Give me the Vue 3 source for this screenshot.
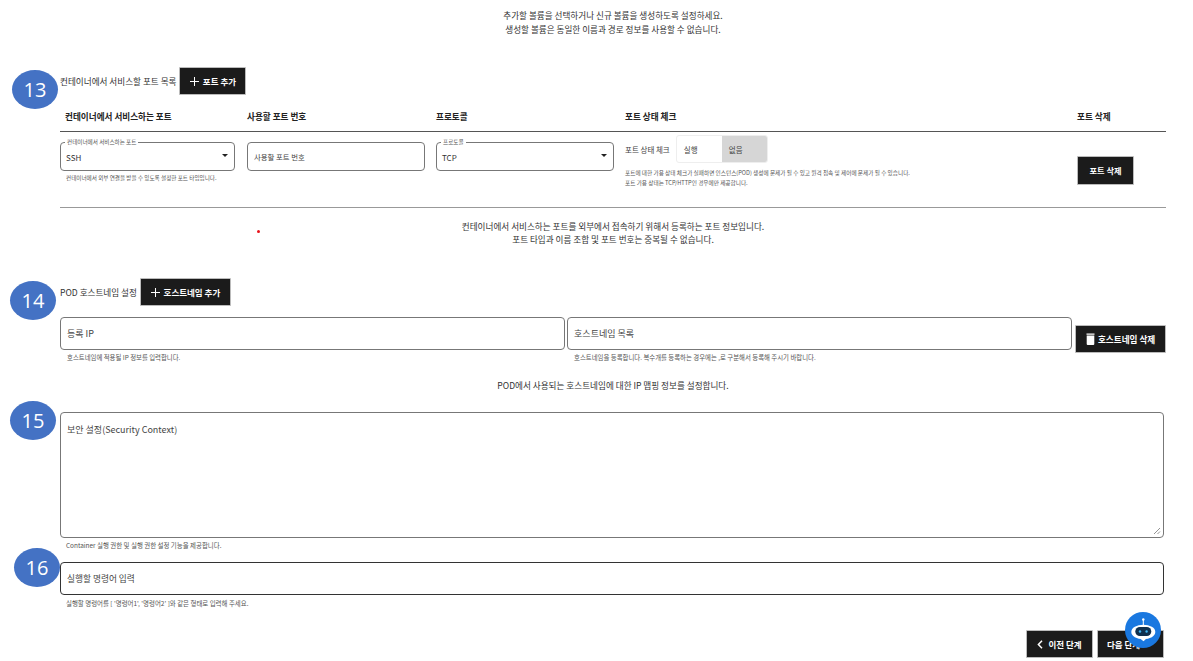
<template>
  <div class="page">
    <p class="notice top-notice">
      추가할 볼륨을 선택하거나 신규 볼륨을 생성하도록 설정하세요.<br />
      생성할 볼륨은 동일한 이름과 경로 정보를 사용할 수 없습니다.
    </p>

    <div class="section-head port-head">
      <span class="section-title">컨테이너에서 서비스할 포트 목록</span>
      <button class="dark-btn add-port">
        <svg class="plus" width="9" height="9" viewBox="0 0 9 9"><path d="M4.5 0v9M0 4.5h9" stroke="#fff" stroke-width="1" /></svg>
        포트 추가
      </button>
    </div>

    <div class="port-table">
      <div class="port-row table-head">
        <div class="first">컨테이너에서 서비스하는 포트</div>
        <div>사용할 포트 번호</div>
        <div>프로토콜</div>
        <div>포트 상태 체크</div>
        <div>포트 삭제</div>
      </div>
      <div class="port-row table-body">
        <div>
          <div class="field select-field first-field">
            <span class="legend">컨테이너에서 서비스하는 포트</span>
            <span class="value">SSH</span>
            <i class="caret"></i>
          </div>
          <p class="help">컨테이너에서 외부 연결을 받을 수 있도록 설정한 포트 타입입니다.</p>
        </div>
        <div>
          <div class="field port-field"><span class="placeholder small">사용할 포트 번호</span></div>
        </div>
        <div>
          <div class="field select-field port-field">
            <span class="legend">프로토콜</span>
            <span class="value">TCP</span>
            <i class="caret"></i>
          </div>
        </div>
        <div class="health-cell">
          <div class="health-line">
            <span class="health-label">포트 상태 체크</span>
            <div class="toggle">
              <span class="on">실행</span>
              <span class="off">없음</span>
            </div>
          </div>
          <p class="help health-help">
            포트에 대한 가용 상태 체크가 실패하면 인스턴스(POD) 생성에 문제가 될 수 있고 원격 접속 및 제어에 문제가 될 수 있습니다.<br />
            포트 가용 상태는 TCP/HTTP인 경우에만 제공합니다.
          </p>
        </div>
        <div class="delete-cell">
          <button class="dark-btn delete-port">포트 삭제</button>
        </div>
      </div>
    </div>

    <p class="notice port-notice">
      컨테이너에서 서비스하는 포트를 외부에서 접속하기 위해서 등록하는 포트 정보입니다.<br />
      포트 타입과 이름 조합 및 포트 번호는 중복될 수 없습니다.
    </p>

    <div class="section-head host-head">
      <span class="section-title">POD 호스트네임 설정</span>
      <button class="dark-btn add-host">
        <svg class="plus" width="9" height="9" viewBox="0 0 9 9"><path d="M4.5 0v9M0 4.5h9" stroke="#fff" stroke-width="1" /></svg>
        호스트네임 추가
      </button>
    </div>

    <div class="host-row">
      <div class="host-col">
        <div class="field tall"><span class="placeholder">등록 IP</span></div>
        <p class="help host-help">호스트네임에 적용될 IP 정보를 입력합니다.</p>
      </div>
      <div class="host-col">
        <div class="field tall"><span class="placeholder">호스트네임 목록</span></div>
        <p class="help host-help">호스트네임을 등록합니다. 복수개를 등록하는 경우에는 ,로 구분해서 등록해 주시기 바랍니다.</p>
      </div>
      <button class="dark-btn delete-host">
        <svg width="9" height="12" viewBox="0 0 9 12">
          <path d="M0.5 0.4h8v1.3h-8z M0.7 2.4h7.6v8.6a1 1 0 0 1-1 1H1.7a1 1 0 0 1-1-1z" fill="#fff" />
        </svg>
        호스트네임 삭제
      </button>
    </div>

    <p class="notice host-notice">POD에서 사용되는 호스트네임에 대한 IP 맵핑 정보를 설정합니다.</p>

    <div class="field area">
      <span class="placeholder">보안 설정(Security Context)</span>
      <svg class="grip" width="8" height="8" viewBox="0 0 8 8">
        <path d="M1 7 7 1M4.5 7 7 4.5" stroke="#777" stroke-width="0.8" fill="none" />
      </svg>
    </div>
    <p class="help wide-help">Container 실행 권한 및 실행 권한 설정 기능을 제공합니다.</p>

    <div class="field tall command"><span class="placeholder command-text">실행할 명령어 입력</span></div>
    <p class="help wide-help">실행할 명령어를 [ '명령어1', '명령어2' ]와 같은 형태로 입력해 주세요.</p>

    <div class="step-actions">
      <button class="dark-btn step">
        <svg width="6" height="9" viewBox="0 0 6 9"><path d="M5 0.8 1.4 4.5 5 8.2" stroke="#fff" stroke-width="1.5" fill="none" /></svg>
        이전 단계
      </button>
      <button class="dark-btn step next">다음 단계</button>
    </div>

    <span class="mark mark-13">13</span>
    <span class="mark mark-14">14</span>
    <span class="mark mark-15">15</span>
    <span class="mark mark-16">16</span>
    <i class="red-dot"></i>

    <div class="chatbot">
      <svg width="36" height="36" viewBox="0 0 36 36">
        <path d="M18.3 7v6" stroke="#fff" stroke-width="1" />
        <circle cx="18.3" cy="7.5" r="1.2" fill="#fff" />
        <ellipse cx="18.3" cy="20" rx="12" ry="7.3" fill="#fff" />
        <path d="M15 26.5h6.5l-3 2.7z" fill="#fff" />
        <rect x="10.3" y="15" width="16" height="9" rx="4.5" fill="#10304f" />
        <circle cx="15" cy="19.5" r="1.2" fill="#3fb4f0" />
        <circle cx="21.6" cy="19.5" r="1.2" fill="#3fb4f0" />
      </svg>
    </div>
  </div>
</template>

<script setup>
</script>

<style>
html,
body {
  margin: 0;
  background: #fff;
}
</style>

<style scoped>
.page {
  position: relative;
  width: 1193px;
  height: 661px;
  overflow: hidden;
  box-sizing: border-box;
  padding: 8px 27px 0 60px;
  font-family: "Noto Sans CJK KR", "Noto Sans", sans-serif;
  color: #222;
}

.notice {
  margin: 0;
  width: 1106px;
  text-align: center;
  font-size: 8.6px;
  line-height: 14px;
  color: #333;
}

.section-head {
  display: flex;
  align-items: center;
  gap: 3px;
}

.port-head {
  margin-top: 31px;
}

.host-head {
  margin-top: 32px;
}

.section-title {
  font-size: 8.6px;
  color: #333;
}

.dark-btn {
  display: inline-flex;
  align-items: center;
  justify-content: center;
  gap: 4px;
  padding: 0;
  border: 1px solid #bbb;
  border-radius: 1px;
  background: #1b1b1b;
  color: #fff;
  font-family: inherit;
  font-size: 8.5px;
  font-weight: 700;
}

.add-port {
  width: 67px;
  height: 28px;
}

.add-host {
  width: 91px;
  height: 28px;
}

.port-table {
  width: 1106px;
  margin-top: 7px;
}

.port-row {
  display: grid;
  grid-template-columns: 187px 189px 189px 452px 1fr;
}

.table-head {
  height: 30px;
  align-items: center;
  font-size: 8.6px;
  font-weight: 700;
  color: #222;
  border-bottom: 1px solid #555;
  padding-bottom: 2px;
  box-sizing: border-box;
}

.table-head .first {
  padding-left: 5px;
}

.table-body {
  height: 76px;
  box-sizing: border-box;
  border-bottom: 1px solid #999;
  padding-top: 10px;
}

.field {
  position: relative;
  box-sizing: border-box;
  border: 1px solid #777;
  border-radius: 4px;
  background: #fff;
  display: flex;
  align-items: center;
  padding-left: 5px;
}

.first-field {
  width: 175px;
  height: 29px;
}

.port-field {
  width: 178px;
  height: 29px;
}

.legend {
  position: absolute;
  top: -4px;
  left: 4px;
  padding: 0 2px;
  background: #fff;
  font-size: 5.6px;
  line-height: 7px;
  color: #555;
}

.value {
  font-size: 8px;
  color: #333;
  padding-top: 2px;
}

.placeholder {
  font-size: 9px;
  color: #444;
}

.placeholder.small {
  font-size: 7.4px;
  padding-left: 1px;
}

.caret {
  position: absolute;
  right: 6px;
  top: 11px;
  border-left: 3px solid transparent;
  border-right: 3px solid transparent;
  border-top: 3.5px solid #222;
}

.help {
  margin: 4px 0 0 6px;
  font-size: 5.6px;
  line-height: 7px;
  color: #555;
}

.health-cell {
  display: flex;
  flex-direction: column;
}

.health-line {
  display: flex;
  align-items: center;
  gap: 6px;
  margin-top: -7px;
}

.health-label {
  font-size: 7.5px;
  color: #444;
}

.toggle {
  display: flex;
  width: 92px;
  height: 28px;
  border: 1px solid #eee;
  border-radius: 3px;
  overflow: hidden;
  font-size: 7.5px;
  color: #444;
  box-sizing: border-box;
}

.toggle span {
  width: 50%;
  display: flex;
  align-items: center;
  padding-left: 7px;
  box-sizing: border-box;
}

.toggle .off {
  background: #d6d6d6;
}

.health-help {
  margin: 5px 0 0;
  font-size: 5.65px;
  line-height: 10px;
}

.delete-cell {
  padding-top: 13px;
}

.delete-port {
  width: 57px;
  height: 29px;
  font-size: 8.2px;
}

.port-notice {
  margin-top: 12px;
  line-height: 13px;
}

.host-row {
  display: flex;
  width: 1106px;
  gap: 2px;
  margin-top: 11px;
}

.host-col {
  width: 506px;
}

.tall {
  height: 33px;
  padding-left: 6px;
}

.host-help {
  margin: 4px 0 0 7px;
  font-size: 6.4px;
}

.delete-host {
  width: 91px;
  height: 28px;
  margin-left: 1px;
  margin-top: 8px;
  gap: 3px;
  font-size: 8.6px;
}

.host-notice {
  margin-top: 17px;
}

.area {
  width: 1104px;
  height: 126px;
  margin-top: 20px;
  align-items: flex-start;
  padding: 10px 6px;
}

.grip {
  position: absolute;
  right: 2px;
  bottom: 2px;
}

.wide-help {
  margin: 4px 0 0 6px;
  font-size: 6.45px;
  line-height: 8px;
}

.command {
  width: 1104px;
  margin-top: 12px;
  border-color: #333;
}

.command + .wide-help {
  margin-top: 5px;
}

.command-text {
  font-size: 8.7px;
}

.step-actions {
  display: flex;
  justify-content: flex-end;
  gap: 4px;
  width: 1104px;
  margin-top: 22px;
}

.step {
  width: 67px;
  height: 28px;
  gap: 5px;
  font-size: 8.5px;
}

.next {
  padding-right: 14px;
}

.mark {
  position: absolute;
  display: flex;
  align-items: center;
  justify-content: center;
  width: 46px;
  height: 39px;
  border-radius: 50%;
  background: #4472c4;
  color: #fff;
  font-family: "Open Sans", sans-serif;
  font-size: 20px;
}

.mark-13 {
  left: 12px;
  top: 70px;
}

.mark-14 {
  left: 10px;
  top: 281px;
}

.mark-15 {
  left: 10px;
  top: 401px;
}

.mark-16 {
  left: 14px;
  top: 548px;
}

.red-dot {
  position: absolute;
  left: 257px;
  top: 230px;
  width: 3px;
  height: 3px;
  border-radius: 50%;
  background: #e8121a;
}

.chatbot {
  position: absolute;
  left: 1125px;
  top: 612px;
  width: 36px;
  height: 36px;
  border-radius: 50%;
  background: #1a78e0;
}
</style>
